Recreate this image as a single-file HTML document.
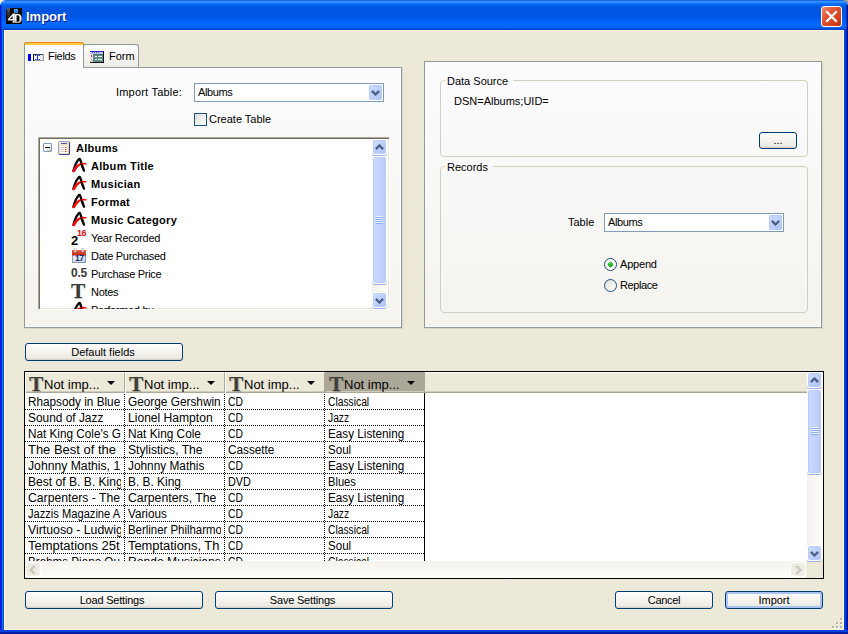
<!DOCTYPE html>
<html>
<head>
<meta charset="utf-8">
<title>Import</title>
<style>
*{box-sizing:border-box;margin:0;padding:0}
html,body{width:848px;height:634px;overflow:hidden;background:#ECE9D8}
body{font-family:"Liberation Sans",sans-serif;font-size:11px;color:#000;position:relative}
.abs{position:absolute}
.t{position:absolute;white-space:nowrap;line-height:13px;height:13px}
/* window chrome */
#win{position:absolute;left:0;top:0;width:848px;height:634px;background:#ECE9D8;overflow:hidden}
#titlebar{position:absolute;left:0;top:0;width:848px;height:30px;border-radius:6px 6px 0 0;
 background:linear-gradient(to bottom,#0046DC 0%,#3A92FF 4%,#2C8AFF 8%,#0C74FF 12%,#0466F4 15.5%,#025EE8 19%,#0058E2 23%,#0055E0 36%,#0057E6 55%,#005CF0 65%,#0264FA 72%,#0468FE 77%,#0468FE 88%,#0260F0 92%,#0050D8 95.5%,#003CC0 100%)}
#corner{position:absolute;left:0;top:0;width:848px;height:10px;background:#ECE9D8}
.bl{position:absolute;top:30px;width:4px;height:604px}
#bleft{left:0;background:linear-gradient(to right,#0019CF 0,#0019CF 1px,#0A2EDC 1px,#0A2EDC 2px,#166AEE 2px,#166AEE 3px,#0A50E0 3px)}
#bright{left:844px;background:linear-gradient(to right,#0A3EE6 0,#0A3EE6 1px,#0444D6 1px,#0444D6 2px,#0024AE 2px,#0024AE 3px,#00138C 3px)}
#bbot{position:absolute;left:0;top:630px;width:848px;height:4px;background:linear-gradient(to bottom,#0A3EE6 0,#0A3EE6 1px,#0444D6 1px,#0444D6 2px,#0024AE 2px,#0024AE 3px,#00138C 3px)}
#cream{position:absolute;left:4px;top:30px;width:840px;height:600px;border:1px solid #FFF5D8}
#title{position:absolute;left:26px;top:9px;font-weight:bold;font-size:13px;line-height:16px;color:#fff;text-shadow:1px 1px 0 #0A1883}
/* panels */
.panel{position:absolute;border:1px solid #919B9C;box-shadow:inset -1px -1px 0 #fff,1px 1px 0 rgba(200,196,176,0.5);background:linear-gradient(to bottom,#FCFCFE 0%,#F4F3EE 100%)}
.tab{position:absolute;border:1px solid #919B9C;border-bottom:none;border-radius:3px 3px 0 0;background:linear-gradient(to bottom,#FFFFFF 0%,#ECEBE6 100%)}
.grp{position:absolute;border:1px solid #D0D0BF;border-radius:4px}
.btn{position:absolute;border:1px solid #003C74;border-radius:3px;background:linear-gradient(to bottom,#FFFFFF 0%,#F3F2EC 50%,#ECEBE5 85%,#D6D0C5 100%);text-align:center;line-height:16px;font-size:11px}
.combo{position:absolute;border:1px solid #7F9DB9;background:#fff}
.cbtn{position:absolute;border-radius:2px;background:linear-gradient(135deg,#CDDBFD 0%,#BDCEFA 55%,#ABC0F4 100%);box-shadow:inset 0 0 0 1px #B9CCF8}

.sbtn{position:absolute;border:1px solid #fff;border-radius:3px;background:linear-gradient(135deg,#D0DEFE 0%,#BACCF9 60%,#AEC2F5 100%);box-shadow:inset 0 0 0 1px #B9CCF8,0 1px 0 rgba(125,155,225,0.75)}
.sthumb{position:absolute;border:1px solid #fff;border-radius:3px;background:linear-gradient(to right,#C9D9FD 0%,#C3D3FD 50%,#B9CBF8 100%);box-shadow:inset 0 0 0 1px #B9CCF8,0 1px 0 rgba(125,155,225,0.75)}
.glabel{background:#FAFAFA}
.radio{position:absolute;width:13px;height:13px;border-radius:50%;border:1px solid #1C5180;background:linear-gradient(135deg,#DCDCD7 0%,#F3F3F0 60%,#FFFFFF 100%)}
.radio .dot{position:absolute;left:3px;top:3px;width:5px;height:5px;border-radius:35%;transform:rotate(45deg);background:linear-gradient(135deg,#6BE066 0%,#2DB52B 55%,#1A961A 100%)}

.hdr{border-right:1px solid #ACA899;border-left:1px solid #fff;border-top:1px solid #fff;overflow:hidden;box-shadow:inset 0 -1px 0 #ACA899,inset 0 -2px 0 #CFCBBB}
.cell{position:absolute;width:100px;height:16px;overflow:hidden;white-space:nowrap;font-size:12px;line-height:15px;
 background-image:linear-gradient(to right,#000 50%,transparent 50%),linear-gradient(to bottom,#000 50%,transparent 50%);background-size:2px 1px,1px 2px;background-repeat:repeat-x,repeat-y;background-position:0 15px,99px 0}
.cell span{position:absolute;left:3px;top:1px;display:block;height:14px;transform-origin:0 0}
.cell::after{content:"";position:absolute;left:96px;top:0;width:3px;height:15px;background:#fff}
.sdis{position:absolute;width:16px;height:15px;border:1px solid #fff;border-radius:3px;background:#EDECE4;box-shadow:inset 0 0 0 1px #F0EFE8}
.btn.def{box-shadow:inset 0 0 0 2px #A9C4F5}
</style>
</head>
<body>
<div id="win">
 <div id="corner"></div><div class="abs" style="left:0;top:0;width:8px;height:8px;background:#FAF4DC"></div><div class="abs" style="left:840px;top:0;width:8px;height:8px;background:#A79C86"></div>
 <div id="titlebar"></div>
 <div id="cream"></div>
 <div class="abs" style="left:0;top:5px;width:2px;height:25px;background:linear-gradient(to right,#0019CF 0,#0019CF 1px,rgba(10,46,220,0.6) 1px)"></div>
 <div class="abs" style="left:846px;top:5px;width:2px;height:25px;background:linear-gradient(to right,rgba(0,36,174,0.7) 0,rgba(0,36,174,0.7) 1px,#00138C 1px)"></div>
 <div id="bleft" class="bl"></div><div id="bright" class="bl"></div><div id="bbot"></div>
 <div id="title">Import</div>

 <!-- close button -->
 <div class="abs" style="left:821px;top:6px;width:21px;height:21px;border:1px solid #fff;border-radius:3px;background:linear-gradient(135deg,#EB8A6E 0%,#E0512F 40%,#D3401E 75%,#B8300F 100%)">
  <svg width="19" height="19" viewBox="0 0 19 19" style="position:absolute;left:0;top:0"><path d="M5 5 L14 14 M14 5 L5 14" stroke="#fff" stroke-width="2.2" stroke-linecap="square" fill="none"/></svg>
 </div>
 <!-- app icon -->
 <svg class="abs" style="left:6px;top:8px" width="16" height="16" viewBox="0 0 16 16">
  <defs><linearGradient id="g4d" x1="0" y1="0" x2="0" y2="1"><stop offset="0" stop-color="#FFFFFF"/><stop offset="0.6" stop-color="#F0F0F0"/><stop offset="1" stop-color="#A8A8A8"/></linearGradient>
  <linearGradient id="g4s" x1="0" y1="0" x2="0" y2="1"><stop offset="0" stop-color="#5A5A5A"/><stop offset="1" stop-color="#0A0A0A"/></linearGradient></defs>
  <rect width="16" height="16" fill="#0A0806"/><path d="M0 0 L2.5 0 L0 2.5Z" fill="#0A5CEC"/>
  <path d="M1 0 L4 0 L4 8 L1 12Z" fill="url(#g4s)"/>
  <rect x="8" y="1" width="4" height="4" fill="#2E8BE6"/><rect x="8" y="1" width="4" height="1" fill="#4FA3F0"/>
  <path fill-rule="evenodd" fill="url(#g4d)" d="M7 5.5 L8.8 5.5 L8.8 11 L10 11 L10 12.4 L8.8 12.4 L8.8 15 L6.6 15 L6.6 12.4 L1.8 12.4 L1.8 11.2 Z M6.6 11 L6.6 7.9 L4 11 Z"/>
  <path fill-rule="evenodd" fill="url(#g4d)" d="M8.8 6 L12 6 Q15.6 6 15.6 10.5 Q15.6 15 12 15 L8.8 15 Z M10.6 7.3 L10.6 13.7 L11.8 13.7 Q13.6 13.7 13.6 10.5 Q13.6 7.3 11.8 7.3Z"/>
 </svg>

 <!-- LEFT PANEL -->
 <div class="panel" style="left:24px;top:67px;width:378px;height:261px"></div>
 <!-- tabs -->
 <div class="tab" id="tabForm" style="left:83px;top:44px;width:56px;height:23px"></div>
 <div class="tab" id="tabFields" style="left:24px;top:42px;width:60px;height:26px;background:#FCFCFE;border-top:none;border-radius:3px 3px 0 0">
   <div class="abs" style="left:-1px;top:0;width:60px;height:3px;background:#FFC73C;border-radius:3px 3px 0 0;border:1px solid #E68B2C;border-bottom:none"></div>
 </div>
 <!-- fields tab icon -->
 <svg class="abs" style="left:27px;top:50px" width="18" height="12" viewBox="0 0 18 12" shape-rendering="crispEdges">
  <rect x="1" y="4" width="3" height="7" fill="#0000FF"/>
  <rect x="6" y="4" width="11" height="7" fill="#fff"/>
  <rect x="13" y="5" width="3" height="5" fill="#E6E6E6"/>
  <rect x="6" y="4" width="11" height="1" fill="#444"/>
  <rect x="16" y="4" width="1" height="7" fill="#9A9A9A"/>
  <rect x="6" y="10" width="11" height="1" fill="#9A9A9A"/>
  <rect x="6" y="4" width="1" height="7" fill="#111"/>
  <g fill="#1030FF"><rect x="8" y="5" width="1" height="1"/><rect x="10" y="5" width="1" height="1"/><rect x="12" y="5" width="1" height="1"/>
  <rect x="8" y="9" width="1" height="1"/><rect x="10" y="9" width="1" height="1"/><rect x="12" y="9" width="1" height="1"/>
  <rect x="10" y="6" width="1" height="3"/></g>
  <rect x="9" y="5" width="1" height="1" fill="#9FB4FF"/><rect x="11" y="5" width="1" height="1" fill="#9FB4FF"/><rect x="9" y="9" width="1" height="1" fill="#9FB4FF"/><rect x="11" y="9" width="1" height="1" fill="#9FB4FF"/>
 </svg>
 <div class="t" id="lblFields" style="left:48px;top:50px;letter-spacing:-0.3px">Fields</div>
 <!-- form tab icon -->
 <svg class="abs" style="left:90px;top:51px" width="14" height="12" viewBox="0 0 14 12" shape-rendering="crispEdges">
  <rect x="0" y="0" width="14" height="12" fill="#5F8F8C"/>
  <rect x="0" y="0" width="13" height="3" fill="#C6C4FA"/>
  <rect x="0" y="0" width="13" height="1" fill="#2A2AC8"/>
  <g fill="#5A5A66"><rect x="2" y="1.4" width="1" height="1"/><rect x="4" y="1.4" width="1" height="1"/><rect x="6" y="1.4" width="1" height="1"/><rect x="8" y="1.4" width="1" height="1"/></g>
  <rect x="0" y="3" width="3" height="8" fill="#E2DEF2"/>
  <rect x="3" y="3" width="10" height="1" fill="#4A6E6C"/>
  <rect x="1" y="4" width="1" height="2" fill="#E02828"/><rect x="1" y="8" width="1" height="2" fill="#E8A020"/>
  <rect x="5" y="5" width="2" height="1" fill="#fff"/><rect x="8" y="5" width="4" height="1" fill="#E8F4F0"/>
  <rect x="5" y="8" width="2" height="1" fill="#fff"/><rect x="8" y="8" width="4" height="1" fill="#E8F4F0"/>
  <rect x="13" y="0" width="1" height="12" fill="#151515"/><rect x="0" y="11" width="14" height="1" fill="#151515"/>
 </svg>
 <div class="t" id="lblForm" style="left:109px;top:50px">Form</div>

 <div class="t" id="lblImportTable" style="left:116px;top:86px;letter-spacing:0.2px">Import Table:</div>
 <div class="combo" style="left:194px;top:83px;width:190px;height:19px"></div>
 <div class="t" style="left:198px;top:86px;letter-spacing:-0.4px">Albums</div>
 <div class="cbtn" style="left:369px;top:85px;width:13px;height:15px"></div>
 <svg class="abs" style="left:371px;top:90px" width="9" height="6" viewBox="0 0 9 6"><path d="M0.9 0.9 L4.5 4.5 L8.1 0.9" stroke="#4D6185" stroke-width="2.3" fill="none"/></svg>
 <!-- checkbox -->
 <div class="abs" style="left:194px;top:113px;width:13px;height:13px;border:1px solid #1C5180;background:linear-gradient(135deg,#DCDCD7 0%,#F3F3F0 60%,#FFFFFF 100%)"></div>
 <div class="t" id="lblCreate" style="left:209px;top:113px">Create Table</div>

 <!-- tree list -->
 <div class="abs" id="tree" style="left:38px;top:137px;width:352px;height:173px;border:1px solid;border-color:#ACA899 #fff #fff #ACA899;box-shadow:inset 1px 1px 0 #716F64,inset -1px -1px 0 #ECE9D8;padding:1px;background:#fff;overflow:hidden">
  <div class="abs" style="left:333px;top:1px;width:16px;height:170px;background:linear-gradient(to right,#F1EFE8 0%,#FEFEFB 100%)"></div>
 </div>
 <!-- expander -->
 <div class="abs" style="left:43px;top:143px;width:9px;height:9px;border:1px solid #7898B5;border-radius:1px;background:linear-gradient(135deg,#fff 0%,#fff 50%,#C3BAAA 100%)"><div class="abs" style="left:1px;top:3px;width:5px;height:1px;background:#000"></div></div>
 <!-- table icon -->
 <svg class="abs" style="left:58px;top:141px" width="13" height="15" viewBox="0 0 13 15">
  <rect x="0.5" y="0.5" width="11" height="13" rx="1.2" fill="#F3E7CB" stroke="#A29ED4" stroke-width="1"/>
  <path d="M11.5 1.2 V12.3 Q11.5 13.5 10.3 13.5 H1.2" stroke="#3F3F7D" stroke-width="1.2" fill="none"/>
  <rect x="3" y="2" width="6" height="1" fill="#5252A8"/>
  <rect x="3" y="5" width="6" height="7" fill="#fff"/>
  <rect x="3" y="6" width="3" height="1" fill="#C9C9C9"/><rect x="3" y="8" width="3" height="1" fill="#C9C9C9"/><rect x="3" y="10" width="3" height="1" fill="#C9C9C9"/>
  <rect x="7" y="6" width="1.4" height="1" fill="#F22C10"/><rect x="7" y="8" width="1.4" height="1" fill="#F22C10"/><rect x="7" y="10" width="1.4" height="1" fill="#F22C10"/>
 </svg>
 <div class="t" id="trAlbums" style="left:76px;top:142px;font-weight:bold;letter-spacing:0.3px">Albums</div>
 <svg class="abs" style="left:71px;top:157px" width="17" height="16" viewBox="0 0 17 16"><path d="M2.4 13.6 Q4.6 5.4 8 2 Q8.7 1.5 9.1 2.4 Q10.6 7 13 13.7" stroke="#0B0805" stroke-width="2.3" fill="none" stroke-linecap="round" stroke-linejoin="round"/><path d="M1 14.8 Q4.2 7.2 10 6 Q13 5.5 15.6 6.2 L15.4 7.6 Q12.5 7.2 10.5 7.8 Q6.5 9.5 3.8 15 Q2 15.6 1 14.8Z" fill="#F40A0A"/><path d="M9.9 6.4 Q10.7 9.5 12 12.5" stroke="#0B0805" stroke-width="1.4" fill="none"/></svg>
 <div class="t trow" style="left:91px;top:160px;font-weight:bold;letter-spacing:0.3px">Album Title</div>
 <svg class="abs" style="left:71px;top:175px" width="17" height="16" viewBox="0 0 17 16"><path d="M2.4 13.6 Q4.6 5.4 8 2 Q8.7 1.5 9.1 2.4 Q10.6 7 13 13.7" stroke="#0B0805" stroke-width="2.3" fill="none" stroke-linecap="round" stroke-linejoin="round"/><path d="M1 14.8 Q4.2 7.2 10 6 Q13 5.5 15.6 6.2 L15.4 7.6 Q12.5 7.2 10.5 7.8 Q6.5 9.5 3.8 15 Q2 15.6 1 14.8Z" fill="#F40A0A"/><path d="M9.9 6.4 Q10.7 9.5 12 12.5" stroke="#0B0805" stroke-width="1.4" fill="none"/></svg>
 <div class="t trow" style="left:91px;top:178px;font-weight:bold;letter-spacing:0.3px">Musician</div>
 <svg class="abs" style="left:71px;top:193px" width="17" height="16" viewBox="0 0 17 16"><path d="M2.4 13.6 Q4.6 5.4 8 2 Q8.7 1.5 9.1 2.4 Q10.6 7 13 13.7" stroke="#0B0805" stroke-width="2.3" fill="none" stroke-linecap="round" stroke-linejoin="round"/><path d="M1 14.8 Q4.2 7.2 10 6 Q13 5.5 15.6 6.2 L15.4 7.6 Q12.5 7.2 10.5 7.8 Q6.5 9.5 3.8 15 Q2 15.6 1 14.8Z" fill="#F40A0A"/><path d="M9.9 6.4 Q10.7 9.5 12 12.5" stroke="#0B0805" stroke-width="1.4" fill="none"/></svg>
 <div class="t trow" style="left:91px;top:196px;font-weight:bold;letter-spacing:0.3px">Format</div>
 <svg class="abs" style="left:71px;top:211px" width="17" height="16" viewBox="0 0 17 16"><path d="M2.4 13.6 Q4.6 5.4 8 2 Q8.7 1.5 9.1 2.4 Q10.6 7 13 13.7" stroke="#0B0805" stroke-width="2.3" fill="none" stroke-linecap="round" stroke-linejoin="round"/><path d="M1 14.8 Q4.2 7.2 10 6 Q13 5.5 15.6 6.2 L15.4 7.6 Q12.5 7.2 10.5 7.8 Q6.5 9.5 3.8 15 Q2 15.6 1 14.8Z" fill="#F40A0A"/><path d="M9.9 6.4 Q10.7 9.5 12 12.5" stroke="#0B0805" stroke-width="1.4" fill="none"/></svg>
 <div class="t trow" style="left:91px;top:214px;font-weight:bold;letter-spacing:0.3px">Music Category</div>
 <div class="t" style="left:71px;top:233px;font-weight:bold;font-size:13px;line-height:15px;height:15px">2</div><div class="t" style="left:77px;top:227px;font-weight:bold;font-size:9px;color:#D01018;letter-spacing:-0.5px">16</div>
 <div class="t trow" style="left:91px;top:232px;letter-spacing:-0.3px">Year Recorded</div>
 <svg class="abs" style="left:72px;top:248px" width="14" height="15" viewBox="0 0 14 15">
  <defs><linearGradient id="calb" x1="0" y1="0" x2="1" y2="1"><stop offset="0" stop-color="#FFFFFF"/><stop offset="1" stop-color="#C4D0E2"/></linearGradient>
  <linearGradient id="calr" x1="0" y1="0" x2="0" y2="1"><stop offset="0" stop-color="#EC6044"/><stop offset="1" stop-color="#B42614"/></linearGradient></defs>
  <rect x="0.5" y="2.5" width="13" height="12" fill="url(#calb)" stroke="#8C9CB4" stroke-width="1"/>
  <rect x="0" y="2" width="14" height="5.5" fill="url(#calr)"/>
  <rect x="2.5" y="0" width="1.6" height="4" fill="#F0F0F0" stroke="#A8A8A8" stroke-width="0.5"/><rect x="10" y="0" width="1.6" height="4" fill="#F0F0F0" stroke="#A8A8A8" stroke-width="0.5"/>
  <text x="7.2" y="13.4" font-family="Liberation Sans" font-weight="bold" font-size="8.5" text-anchor="middle" fill="#1A2A6C" letter-spacing="-0.5">17</text>
 </svg>
 <div class="t trow" style="left:91px;top:250px;letter-spacing:-0.3px">Date Purchased</div>
 <div class="t" style="left:71px;top:267px;font-weight:bold;font-size:12px;color:#3A3A3A;letter-spacing:-0.2px">0.5</div>
 <div class="t trow" style="left:91px;top:268px;letter-spacing:-0.3px">Purchase Price</div>
 <div class="t" style="left:71px;top:281px;font-family:'Liberation Serif',serif;font-weight:bold;font-size:20px;line-height:20px;height:20px;color:#3A3A3A;transform:scaleX(1.08);transform-origin:0 0;text-shadow:0 1px 1px rgba(90,90,80,0.4)">T</div>
 <div class="t trow" style="left:91px;top:286px;letter-spacing:-0.3px">Notes</div>
 <div class="abs" style="left:40px;top:300px;width:332px;height:9px;overflow:hidden"><svg class="abs" style="left:31px;top:1px" width="17" height="16" viewBox="0 0 17 16"><path d="M2.4 13.6 Q4.6 5.4 8 2 Q8.7 1.5 9.1 2.4 Q10.6 7 13 13.7" stroke="#0B0805" stroke-width="2.3" fill="none" stroke-linecap="round" stroke-linejoin="round"/><path d="M1 14.8 Q4.2 7.2 10 6 Q13 5.5 15.6 6.2 L15.4 7.6 Q12.5 7.2 10.5 7.8 Q6.5 9.5 3.8 15 Q2 15.6 1 14.8Z" fill="#F40A0A"/><path d="M9.9 6.4 Q10.7 9.5 12 12.5" stroke="#0B0805" stroke-width="1.4" fill="none"/></svg><div class="t" style="left:51px;top:4px;letter-spacing:-0.3px">Performed by</div></div>
 <div class="sbtn" style="left:372px;top:139px;width:15px;height:16px"><svg width="9" height="6" viewBox="0 0 9 6" style="position:absolute;left:2px;top:4px"><path d="M0.9 5.1 L4.5 1.5 L8.1 5.1" stroke="#4D6185" stroke-width="2.3" fill="none"/></svg></div>
 <div class="sthumb" style="left:372px;top:156px;width:15px;height:128px"><div style="position:absolute;left:3px;top:59px;width:7px;height:8px;background:repeating-linear-gradient(to bottom,#EEF4FE 0,#EEF4FE 1px,#8CB0F8 1px,#8CB0F8 2px)"></div></div>
 <div class="sbtn" style="left:372px;top:292px;width:15px;height:16px"><svg width="9" height="6" viewBox="0 0 9 6" style="position:absolute;left:2px;top:5px"><path d="M0.9 0.9 L4.5 4.5 L8.1 0.9" stroke="#4D6185" stroke-width="2.3" fill="none"/></svg></div>

 <!-- RIGHT PANEL -->
 <div class="panel" style="left:424px;top:61px;width:398px;height:267px"></div>
 <div class="grp" style="left:440px;top:80px;width:368px;height:77px"></div>
 <div class="t glabel" style="left:445px;top:75px;padding:0 5px 0 2px;background:#FBFBFD">Data Source</div>
 <div class="t" style="left:454px;top:95px">DSN=Albums;UID=</div>
 <div class="btn" style="left:759px;top:132px;width:38px;height:17px;line-height:14px">...</div>
 <div class="grp" style="left:440px;top:166px;width:368px;height:147px"></div>
 <div class="t glabel" style="left:445px;top:161px;padding:0 5px 0 2px;background:#F9F8F8">Records</div>
 <div class="t" style="left:568px;top:216px">Table</div>
 <div class="combo" style="left:604px;top:213px;width:180px;height:19px"></div>
 <div class="t" style="left:608px;top:216px;letter-spacing:-0.4px">Albums</div>
 <div class="cbtn" style="left:769px;top:215px;width:13px;height:15px"></div>
 <svg class="abs" style="left:771px;top:220px" width="9" height="6" viewBox="0 0 9 6"><path d="M0.9 0.9 L4.5 4.5 L8.1 0.9" stroke="#4D6185" stroke-width="2.3" fill="none"/></svg>
 <div class="radio" style="left:604px;top:258px;background:linear-gradient(135deg,#F0F0EC 0%,#FFFFFF 55%)"><div class="dot"></div></div>
 <div class="t" style="left:620px;top:258px;letter-spacing:-0.2px">Append</div>
 <div class="radio" style="left:604px;top:279px"></div>
 <div class="t" style="left:620px;top:279px;letter-spacing:-0.4px">Replace</div>

 <!-- Default fields -->
 <div class="btn" style="left:25px;top:343px;width:158px;height:18px;padding-right:2px">Default fields</div>
 <!-- GRID -->
 <div class="abs" id="grid" style="left:24px;top:371px;width:800px;height:208px;border:1px solid #000;background:#fff;overflow:hidden">
  <div class="abs" style="left:0;top:0;width:783px;height:21px;background:#ECE9D8;border-top:1px solid #fff;box-shadow:inset 0 -1px 0 #ACA899,inset 0 -2px 0 #CFCBBB"></div>
  <div class="abs hdr" style="left:0px;top:0;width:100px;height:21px;background:#ECE9D8;"><div class="t" style="left:3px;top:0px;font-family:'Liberation Serif',serif;font-weight:bold;font-size:21.5px;line-height:22px;height:22px;color:#3E3E3A;text-shadow:1px 1px 1px rgba(90,90,80,0.45)">T</div><div class="t hdt" style="left:18px;top:4px;font-size:13px;line-height:15px;height:15px">Not imp...</div><svg class="abs" style="left:81px;top:8px" width="8" height="4" viewBox="0 0 8 4"><path d="M0 0 H8 L4 4Z" fill="#000"/></svg></div>
  <div class="abs hdr" style="left:100px;top:0;width:100px;height:21px;background:#ECE9D8;"><div class="t" style="left:3px;top:0px;font-family:'Liberation Serif',serif;font-weight:bold;font-size:21.5px;line-height:22px;height:22px;color:#3E3E3A;text-shadow:1px 1px 1px rgba(90,90,80,0.45)">T</div><div class="t hdt" style="left:18px;top:4px;font-size:13px;line-height:15px;height:15px">Not imp...</div><svg class="abs" style="left:81px;top:8px" width="8" height="4" viewBox="0 0 8 4"><path d="M0 0 H8 L4 4Z" fill="#000"/></svg></div>
  <div class="abs hdr" style="left:200px;top:0;width:100px;height:21px;background:#ECE9D8;"><div class="t" style="left:3px;top:0px;font-family:'Liberation Serif',serif;font-weight:bold;font-size:21.5px;line-height:22px;height:22px;color:#3E3E3A;text-shadow:1px 1px 1px rgba(90,90,80,0.45)">T</div><div class="t hdt" style="left:18px;top:4px;font-size:13px;line-height:15px;height:15px">Not imp...</div><svg class="abs" style="left:81px;top:8px" width="8" height="4" viewBox="0 0 8 4"><path d="M0 0 H8 L4 4Z" fill="#000"/></svg></div>
  <div class="abs hdr" style="left:300px;top:0;width:100px;height:21px;background:#ACA899;border-color:#ACA899;"><div class="t" style="left:3px;top:0px;font-family:'Liberation Serif',serif;font-weight:bold;font-size:21.5px;line-height:22px;height:22px;color:#3E3E3A;text-shadow:1px 1px 1px rgba(90,90,80,0.45)">T</div><div class="t hdt" style="left:18px;top:4px;font-size:13px;line-height:15px;height:15px">Not imp...</div><svg class="abs" style="left:81px;top:8px" width="8" height="4" viewBox="0 0 8 4"><path d="M0 0 H8 L4 4Z" fill="#000"/></svg></div>
  <div class="cell" style="left:0px;top:22px"><span style="transform:scaleX(0.98)">Rhapsody in Blue</span></div>
  <div class="cell" style="left:100px;top:22px"><span style="transform:scaleX(0.985)">George Gershwin</span></div>
  <div class="cell" style="left:200px;top:22px"><span style="transform:scaleX(0.859)">CD</span></div>
  <div class="cell" style="left:300px;top:22px"><span style="transform:scaleX(0.857)">Classical</span></div>
  <div class="cell" style="left:0px;top:38px"><span style="transform:scaleX(0.991)">Sound of Jazz</span></div>
  <div class="cell" style="left:100px;top:38px"><span style="transform:scaleX(1.007)">Lionel Hampton</span></div>
  <div class="cell" style="left:200px;top:38px"><span style="transform:scaleX(0.859)">CD</span></div>
  <div class="cell" style="left:300px;top:38px"><span style="transform:scaleX(0.857)">Jazz</span></div>
  <div class="cell" style="left:0px;top:54px"><span style="transform:scaleX(0.978)">Nat King Cole's G</span></div>
  <div class="cell" style="left:100px;top:54px"><span style="transform:scaleX(0.985)">Nat King Cole</span></div>
  <div class="cell" style="left:200px;top:54px"><span style="transform:scaleX(0.859)">CD</span></div>
  <div class="cell" style="left:300px;top:54px"><span style="transform:scaleX(0.976)">Easy Listening</span></div>
  <div class="cell" style="left:0px;top:70px"><span style="transform:scaleX(1.08)">The Best of the</span></div>
  <div class="cell" style="left:100px;top:70px"><span style="transform:scaleX(1.011)">Stylistics, The</span></div>
  <div class="cell" style="left:200px;top:70px"><span style="transform:scaleX(0.98)">Cassette</span></div>
  <div class="cell" style="left:300px;top:70px"><span style="transform:scaleX(0.963)">Soul</span></div>
  <div class="cell" style="left:0px;top:86px"><span style="transform:scaleX(1.016)">Johnny Mathis, 1</span></div>
  <div class="cell" style="left:100px;top:86px"><span style="transform:scaleX(0.987)">Johnny Mathis</span></div>
  <div class="cell" style="left:200px;top:86px"><span style="transform:scaleX(0.859)">CD</span></div>
  <div class="cell" style="left:300px;top:86px"><span style="transform:scaleX(0.976)">Easy Listening</span></div>
  <div class="cell" style="left:0px;top:102px"><span style="transform:scaleX(1.006)">Best of B. B. King</span></div>
  <div class="cell" style="left:100px;top:102px"><span style="transform:scaleX(0.991)">B. B. King</span></div>
  <div class="cell" style="left:200px;top:102px"><span style="transform:scaleX(0.904)">DVD</span></div>
  <div class="cell" style="left:300px;top:102px"><span style="transform:scaleX(0.929)">Blues</span></div>
  <div class="cell" style="left:0px;top:118px"><span style="transform:scaleX(1.018)">Carpenters - The</span></div>
  <div class="cell" style="left:100px;top:118px"><span style="transform:scaleX(1.022)">Carpenters, The</span></div>
  <div class="cell" style="left:200px;top:118px"><span style="transform:scaleX(0.859)">CD</span></div>
  <div class="cell" style="left:300px;top:118px"><span style="transform:scaleX(0.976)">Easy Listening</span></div>
  <div class="cell" style="left:0px;top:134px"><span style="transform:scaleX(0.927)">Jazzis Magazine A</span></div>
  <div class="cell" style="left:100px;top:134px"><span style="transform:scaleX(0.977)">Various</span></div>
  <div class="cell" style="left:200px;top:134px"><span style="transform:scaleX(0.859)">CD</span></div>
  <div class="cell" style="left:300px;top:134px"><span style="transform:scaleX(0.857)">Jazz</span></div>
  <div class="cell" style="left:0px;top:150px"><span style="transform:scaleX(1.024)">Virtuoso - Ludwig</span></div>
  <div class="cell" style="left:100px;top:150px"><span style="transform:scaleX(0.951)">Berliner Philharmo</span></div>
  <div class="cell" style="left:200px;top:150px"><span style="transform:scaleX(0.859)">CD</span></div>
  <div class="cell" style="left:300px;top:150px"><span style="transform:scaleX(0.857)">Classical</span></div>
  <div class="cell" style="left:0px;top:166px"><span style="transform:scaleX(1.082)">Temptations 25t</span></div>
  <div class="cell" style="left:100px;top:166px"><span style="transform:scaleX(1.073)">Temptations, Th</span></div>
  <div class="cell" style="left:200px;top:166px"><span style="transform:scaleX(0.859)">CD</span></div>
  <div class="cell" style="left:300px;top:166px"><span style="transform:scaleX(0.963)">Soul</span></div>
  <div class="cell" style="left:0px;top:182px"><span style="transform:scaleX(0.97)">Brahms Piano Qu</span></div>
  <div class="cell" style="left:100px;top:182px"><span style="transform:scaleX(1.009)">Rondo Musicians</span></div>
  <div class="cell" style="left:200px;top:182px"><span style="transform:scaleX(0.859)">CD</span></div>
  <div class="cell" style="left:300px;top:182px"><span style="transform:scaleX(0.857)">Classical</span></div>
  <div class="abs" style="left:399px;top:21px;width:1px;height:169px;background:#000"></div>
  <div class="abs" style="left:0;top:189px;width:781px;height:17px;background:linear-gradient(to bottom,#F3F2EC 0%,#FEFEFB 100%)"></div>
  <div class="abs" style="left:781px;top:189px;width:17px;height:17px;background:#ECE9D8"></div>
  <div class="sdis" style="left:0px;top:190px"><svg width="7" height="10" viewBox="0 0 7 10" style="position:absolute;left:3px;top:2px"><path d="M5.6 0.9 L1.6 4.9 L5.6 8.9" stroke="#C9C7BA" stroke-width="2.2" fill="none"/></svg></div>
  <div class="sdis" style="left:765px;top:190px"><svg width="7" height="10" viewBox="0 0 7 10" style="position:absolute;left:4px;top:2px"><path d="M1.4 0.9 L5.4 4.9 L1.4 8.9" stroke="#C9C7BA" stroke-width="2.2" fill="none"/></svg></div>
  <div class="abs" style="left:782px;top:0;width:16px;height:189px;background:linear-gradient(to right,#F3F1EC 0%,#FEFEFB 100%)"></div>
 </div>
 <div class="sbtn" style="left:807px;top:372px;width:15px;height:16px"><svg width="9" height="6" viewBox="0 0 9 6" style="position:absolute;left:2px;top:4px"><path d="M0.9 5.1 L4.5 1.5 L8.1 5.1" stroke="#4D6185" stroke-width="2.3" fill="none"/></svg></div>
 <div class="sthumb" style="left:807px;top:389px;width:15px;height:85px"><div style="position:absolute;left:3px;top:37px;width:7px;height:8px;background:repeating-linear-gradient(to bottom,#EEF4FE 0,#EEF4FE 1px,#8CB0F8 1px,#8CB0F8 2px)"></div></div>
 <div class="sbtn" style="left:807px;top:545px;width:15px;height:16px"><svg width="9" height="6" viewBox="0 0 9 6" style="position:absolute;left:2px;top:5px"><path d="M0.9 0.9 L4.5 4.5 L8.1 0.9" stroke="#4D6185" stroke-width="2.3" fill="none"/></svg></div>

 <!-- bottom buttons -->
 <div class="btn" style="left:25px;top:591px;width:178px;height:18px;letter-spacing:-0.2px;padding-right:4px">Load Settings</div>
 <div class="btn" style="left:215px;top:591px;width:178px;height:18px;letter-spacing:-0.2px;padding-right:3px">Save Settings</div>
 <div class="btn" style="left:615px;top:591px;width:98px;height:18px;letter-spacing:-0.3px">Cancel</div>
 <div class="btn def" style="left:725px;top:591px;width:98px;height:18px">Import</div>
 <!-- grip -->
 <svg class="abs" style="left:831px;top:617px" width="13" height="13" viewBox="0 0 13 13">
  <g fill="#B8B4A2"><rect x="9" y="1" width="2" height="2"/><rect x="5" y="5" width="2" height="2"/><rect x="9" y="5" width="2" height="2"/><rect x="1" y="9" width="2" height="2"/><rect x="5" y="9" width="2" height="2"/><rect x="9" y="9" width="2" height="2"/></g>
  <g fill="#fff"><rect x="10" y="2" width="2" height="2"/><rect x="6" y="6" width="2" height="2"/><rect x="10" y="6" width="2" height="2"/><rect x="2" y="10" width="2" height="2"/><rect x="6" y="10" width="2" height="2"/><rect x="10" y="10" width="2" height="2"/></g>
  <g fill="#B8B4A2"><rect x="9" y="1" width="2" height="2"/><rect x="5" y="5" width="2" height="2"/><rect x="9" y="5" width="2" height="2"/><rect x="1" y="9" width="2" height="2"/><rect x="5" y="9" width="2" height="2"/><rect x="9" y="9" width="2" height="2"/></g>
 </svg>

</div>
</body>
</html>
